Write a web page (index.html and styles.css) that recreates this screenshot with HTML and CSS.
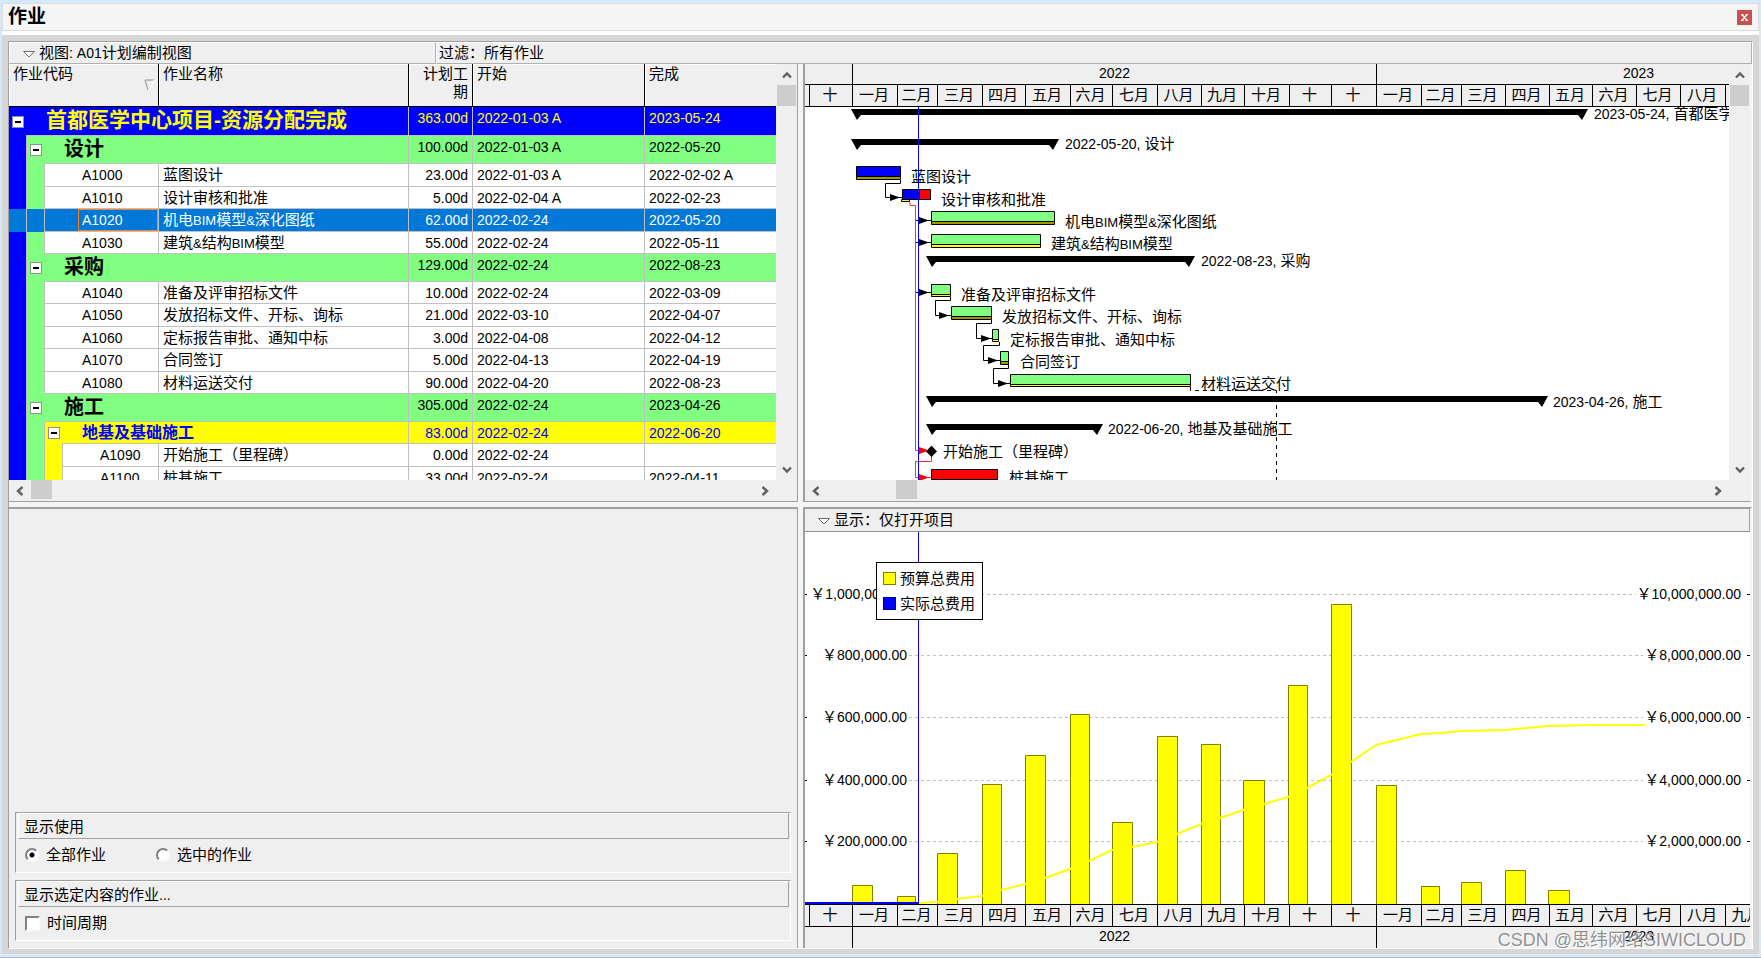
FILE: index.html
```html
<!DOCTYPE html>
<html lang="zh-CN">
<head>
<meta charset="utf-8">
<title>作业</title>
<link rel="stylesheet" href="styles.css">
</head>
<body>
<svg class="defs" aria-hidden="true">
  <symbol id="up" viewBox="0 0 10 10"><path d="M1 7.5 5 3.5 9 7.5" fill="none" stroke="#606060" stroke-width="2.4"/></symbol>
  <symbol id="down" viewBox="0 0 10 10"><path d="M1 2.5 5 6.5 9 2.5" fill="none" stroke="#606060" stroke-width="2.4"/></symbol>
  <symbol id="left" viewBox="0 0 10 10"><path d="M7.5 1 3 5 7.5 9" fill="none" stroke="#606060" stroke-width="2.4"/></symbol>
  <symbol id="right" viewBox="0 0 10 10"><path d="M2.5 1 7 5 2.5 9" fill="none" stroke="#606060" stroke-width="2.4"/></symbol>
  <symbol id="menu" viewBox="0 0 12 8"><path d="M.5 1.500H11.500L6 7Z" fill="#fff" stroke="#707070"/></symbol>
</svg>

<header class="titlebar">
  <h1>作业</h1>
  <button class="close" aria-label="关闭"><svg width="7" height="7" viewBox="0 0 7 7"><path d="M1 .5 6 6.5M6 .5 1 6.5M0 .5H2.4M4.6 .5H7M0 6.5H2.4M4.6 6.5H7" stroke="#fff" stroke-width="1.3"/></svg></button>
</header>

<main class="shell">
 <div class="frame">
  <div class="toolbar">
    <button class="view"><svg class="tri"><use href="#menu"/></svg>视图<span class="latin">: A01</span>计划编制视图</button>
    <div class="filter">过滤：所有作业</div>
  </div>
  <div class="panes">

   <section class="pane top left">
    <div class="scrollbox">
     <div class="content">
      <table class="tasks">
       <colgroup><col class="c-id"><col class="c-name"><col class="c-dur"><col class="c-start"><col></colgroup>
       <thead><tr>
        <th>作业代码<svg class="sort" width="11" height="12" viewBox="0 0 11 12"><path d="M1 1H10" stroke="#909090"/><path d="M1 1 4 11" stroke="#909090"/><path d="M10 1 5 11" stroke="#fff"/></svg></th>
        <th>作业名称</th><th class="num">计划工期</th><th>开始</th><th>完成</th>
       </tr></thead>
       <tbody>
        <tr class="root"><td colspan="2"><div class="tree"><span class="fold"><button aria-label="折叠"></button></span><span class="title">首都医学中心项目-资源分配完成</span></div></td><td class="num">363.00d</td><td>2022-01-03 A</td><td>2023-05-24</td></tr>
        <tr class="group"><td colspan="2"><div class="tree"><i class="bar blue"></i><span class="fold"><button aria-label="折叠"></button></span><span class="title">设计</span></div></td><td class="num">100.00d</td><td>2022-01-03 A</td><td>2022-05-20</td></tr>
        <tr><td><div class="tree"><i class="bar blue"></i><i class="bar green"></i><span class="id"><b>A1000</b></span></div></td><td class="name">蓝图设计</td><td class="num">23.00d</td><td>2022-01-03 A</td><td>2022-02-02 A</td></tr>
        <tr><td><div class="tree"><i class="bar blue"></i><i class="bar green"></i><span class="id"><b>A1010</b></span></div></td><td class="name">设计审核和批准</td><td class="num">5.00d</td><td>2022-02-04 A</td><td>2022-02-23</td></tr>
        <tr class="selected"><td><div class="tree"><i class="bar blue"></i><i class="bar green"></i><span class="id"><b>A1020</b></span></div></td><td class="name">机电<span class="small">BIM</span>模型<span class="small">&amp;</span>深化图纸</td><td class="num">62.00d</td><td>2022-02-24</td><td>2022-05-20</td></tr>
        <tr><td><div class="tree"><i class="bar blue"></i><i class="bar green"></i><span class="id"><b>A1030</b></span></div></td><td class="name">建筑<span class="small">&amp;</span>结构<span class="small">BIM</span>模型</td><td class="num">55.00d</td><td>2022-02-24</td><td>2022-05-11</td></tr>
        <tr class="group"><td colspan="2"><div class="tree"><i class="bar blue"></i><span class="fold"><button aria-label="折叠"></button></span><span class="title">采购</span></div></td><td class="num">129.00d</td><td>2022-02-24</td><td>2022-08-23</td></tr>
        <tr><td><div class="tree"><i class="bar blue"></i><i class="bar green"></i><span class="id"><b>A1040</b></span></div></td><td class="name">准备及评审招标文件</td><td class="num">10.00d</td><td>2022-02-24</td><td>2022-03-09</td></tr>
        <tr><td><div class="tree"><i class="bar blue"></i><i class="bar green"></i><span class="id"><b>A1050</b></span></div></td><td class="name">发放招标文件、开标、询标</td><td class="num">21.00d</td><td>2022-03-10</td><td>2022-04-07</td></tr>
        <tr><td><div class="tree"><i class="bar blue"></i><i class="bar green"></i><span class="id"><b>A1060</b></span></div></td><td class="name">定标报告审批、通知中标</td><td class="num">3.00d</td><td>2022-04-08</td><td>2022-04-12</td></tr>
        <tr><td><div class="tree"><i class="bar blue"></i><i class="bar green"></i><span class="id"><b>A1070</b></span></div></td><td class="name">合同签订</td><td class="num">5.00d</td><td>2022-04-13</td><td>2022-04-19</td></tr>
        <tr><td><div class="tree"><i class="bar blue"></i><i class="bar green"></i><span class="id"><b>A1080</b></span></div></td><td class="name">材料运送交付</td><td class="num">90.00d</td><td>2022-04-20</td><td>2022-08-23</td></tr>
        <tr class="group"><td colspan="2"><div class="tree"><i class="bar blue"></i><span class="fold"><button aria-label="折叠"></button></span><span class="title">施工</span></div></td><td class="num">305.00d</td><td>2022-02-24</td><td>2023-04-26</td></tr>
        <tr class="sub"><td colspan="2"><div class="tree"><i class="bar blue"></i><i class="bar green"></i><span class="fold"><button aria-label="折叠"></button></span><span class="title">地基及基础施工</span></div></td><td class="num">83.00d</td><td>2022-02-24</td><td>2022-06-20</td></tr>
        <tr><td><div class="tree"><i class="bar blue"></i><i class="bar green"></i><i class="bar yellow"></i><span class="id"><b>A1090</b></span></div></td><td class="name">开始施工（里程碑）</td><td class="num">0.00d</td><td>2022-02-24</td><td></td></tr>
        <tr><td><div class="tree"><i class="bar blue"></i><i class="bar green"></i><i class="bar yellow"></i><span class="id"><b>A1100</b></span></div></td><td class="name">桩基施工</td><td class="num">33.00d</td><td>2022-02-24</td><td>2022-04-11</td></tr>
       </tbody>
      </table>
     </div>
     <div class="vscroll"><button aria-label="向上"><svg><use href="#up"/></svg></button><i class="thumb"></i><button aria-label="向下"><svg><use href="#down"/></svg></button></div>
     <div class="hscroll"><button aria-label="向左"><svg><use href="#left"/></svg></button><i class="thumb"></i><button aria-label="向右"><svg><use href="#right"/></svg></button></div>
    </div>
   </section>

   <section class="pane top right">
    <div class="scrollbox">
     <div class="content gantt">
      <div class="scale">
       <div class="years"><span style="width:47px"></span><span style="width:524px">2022</span><span style="width:524px">2023</span></div>
       <div class="months"><span style="width:4px"></span><span style="width:43px">十</span><span style="width:45px">一月</span><span style="width:40px">二月</span><span style="width:45px">三月</span><span style="width:43px">四月</span><span style="width:45px">五月</span><span style="width:42px">六月</span><span style="width:45px">七月</span><span style="width:44px">八月</span><span style="width:43px">九月</span><span style="width:45px">十月</span><span style="width:42px">十</span><span style="width:45px">十</span><span style="width:45px">一月</span><span style="width:40px">二月</span><span style="width:44px">三月</span><span style="width:44px">四月</span><span style="width:43px">五月</span><span style="width:44px">六月</span><span style="width:44px">七月</span><span style="width:45px">八月</span><span style="width:44px">九月</span></div>
      </div>
      <svg class="canvas">
       <defs>
        <path id="head" d="M-11-3.5-1 0-11 3.5Z"/>
       </defs>
       <g transform="translate(-805 -107)">
        <!-- summary bars -->
        <path d="M851 109H1588L1582 120 1578 115H861L857 120Z"/>
        <path d="M851 139H1059L1053 150 1049 145H861L857 150Z"/>
        <path d="M926 256H1195L1189 267 1185 262H936L932 267Z"/>
        <path d="M926 396H1548L1542 407 1538 402H936L932 407Z"/>
        <path d="M926 424H1103L1097 435 1093 430H936L932 435Z"/>
        <!-- task bars -->
        <g stroke="#000">
         <path fill="#00f" d="M856.500 166.500H900.500V176.500H856.500Z"/><path fill="#a09800" d="M856.500 176.500H900.500V179.500H856.500Z"/>
         <path fill="#ff0" d="M901.500 199.500H909.500V201.500H901.500Z"/><path fill="#00f" d="M902.500 189.500H919.500V199.500H902.500Z"/><path fill="#f00" d="M919.500 189.500H930.500V199.500H919.500Z"/>
         <path fill="#80ff80" d="M931.500 211.500H1054.500V221.500H931.500Z"/><path fill="#a09800" d="M931.500 221.500H1054.500V224.500H931.500Z"/>
         <path fill="#80ff80" d="M931.500 234.500H1040.500V244.500H931.500Z"/><path fill="#ff0" d="M931.500 244.500H1040.500V247.500H931.500Z"/>
         <path fill="#80ff80" d="M931.500 284.500H950.500V294.500H931.500Z"/><path fill="#ff0" d="M931.500 294.500H950.500V296.500H931.500Z"/>
         <path fill="#80ff80" d="M951.500 306.500H991.500V316.500H951.500Z"/><path fill="#a09800" d="M951.500 316.500H991.500V319.500H951.500Z"/>
         <path fill="#80ff80" d="M992.500 329.500H998.500V339.500H992.500Z"/><path fill="#ff0" d="M992.500 339.500H998.500V341.500H992.500Z"/>
         <path fill="#80ff80" d="M1000.500 351.500H1008.500V361.500H1000.500Z"/><path fill="#a09800" d="M1000.500 361.500H1008.500V364.500H1000.500Z"/>
         <path fill="#80ff80" d="M1010.500 374.500H1190.500V384.500H1010.500Z"/><path fill="#ff0" d="M1010.500 384.500H1190.500V386.500H1010.500Z"/>
         <path fill="#f00" d="M931.500 469.500H997.500V479.500H931.500Z"/>
        </g>
        <!-- relationship lines -->
        <g fill="none" stroke="#000">
         <path d="M900.500 180V183.500H885.500V197.500H902"/>
         <path d="M915 220.500H931M915 242.500H931M915 292.500H931"/>
         <path d="M950.500 297V300.500H935.500V315.500H951"/>
         <path d="M991.500 320V323.500H976.500V338.500H992"/>
         <path d="M999.500 342V345.500H983.500V360.500H1000"/>
         <path d="M1008.500 365V368.500H993.500V383.500H1010"/>
         <path stroke-dasharray="4 4" d="M1190.500 387V390.500H1276.500V480"/>
         <path stroke="#ff3030" d="M910 202V205.500H915.500V450.500H931M931.500 456V461.500H915.500V477.500H931"/>
        </g>
        <use href="#head" x="901" y="197.500"/><use href="#head" x="930" y="220.500"/><use href="#head" x="930" y="242.500"/><use href="#head" x="930" y="292.500"/>
        <use href="#head" x="950" y="315.500"/><use href="#head" x="992" y="338.500"/><use href="#head" x="999" y="360.500"/><use href="#head" x="1009" y="383.500"/>
        <use href="#head" x="930" y="450.500" fill="#f00"/><use href="#head" x="930" y="477.500" fill="#f00"/>
        <path d="M931.500 445.500 937 451.500 931.500 457 926 451.500Z"/>
        <text x="1594" y="119"><tspan class="d">2023-05-24, </tspan>首都医学中心项目-资源分配完成</text>
        <text x="1065" y="149"><tspan class="d">2022-05-20, </tspan>设计</text>
        <text x="911" y="182">蓝图设计</text>
        <text x="941" y="205">设计审核和批准</text>
        <text x="1065" y="227">机电<tspan class="small">BIM</tspan>模型<tspan class="small">&amp;</tspan>深化图纸</text>
        <text x="1051" y="249">建筑<tspan class="small">&amp;</tspan>结构<tspan class="small">BIM</tspan>模型</text>
        <text x="1201" y="266"><tspan class="d">2022-08-23, </tspan>采购</text>
        <text x="961" y="300">准备及评审招标文件</text>
        <text x="1002" y="322">发放招标文件、开标、询标</text>
        <text x="1010" y="345">定标报告审批、通知中标</text>
        <text x="1020" y="367">合同签订</text>
        <text x="1201" y="389">材料运送交付</text>
        <text x="1553" y="407"><tspan class="d">2023-04-26, </tspan>施工</text>
        <text x="1108" y="434"><tspan class="d">2022-06-20, </tspan>地基及基础施工</text>
        <text x="943" y="457">开始施工（里程碑）</text>
        <text x="1009" y="483">桩基施工</text>
        <path d="M918.500 107V900" stroke="#00f"/>
       </g>
      </svg>
     </div>
     <div class="vscroll"><button aria-label="向上"><svg><use href="#up"/></svg></button><i class="thumb"></i><button aria-label="向下"><svg><use href="#down"/></svg></button></div>
     <div class="hscroll offset"><button aria-label="向左"><svg><use href="#left"/></svg></button><i class="thumb"></i><button aria-label="向右"><svg><use href="#right"/></svg></button></div>
    </div>
   </section>

   <section class="pane bottom left options">
    <fieldset>
     <legend>显示使用</legend>
     <div class="choices">
      <label><input type="radio" name="use" checked>全部作业</label>
      <label><input type="radio" name="use">选中的作业</label>
     </div>
    </fieldset>
    <fieldset>
     <legend>显示选定内容的作业<span class="latin">...</span></legend>
     <div class="choices"><label><input type="checkbox">时间周期</label></div>
    </fieldset>
   </section>

   <section class="pane bottom right profile">
    <button class="display"><svg class="tri"><use href="#menu"/></svg>显示：仅打开项目</button>
    <div class="plot">
     <svg class="canvas">
      <g transform="translate(-805 -532)">
       <path d="M909 594.500H1636M909 655.500H1643M909 717.500H1643M909 780.500H1643M909 841.500H1643" stroke="#c0c0c0" stroke-dasharray="3 3"/>
       <path d="M805 594.500H807M805 655.500H807M805 717.500H807M805 780.500H807M805 841.500H807M1747 594.500H1750M1747 655.500H1750M1747 717.500H1750M1747 780.500H1750M1747 841.500H1750" stroke="#000"/>
       <g fill="#ff0" stroke="#808000">
        <path d="M852.500 904V885.500H872.500V904"/><path d="M897.500 904V896.500H915.500V904"/><path d="M937.500 904V853.500H957.500V904"/>
        <path d="M982.500 904V784.500H1001.500V904"/><path d="M1025.500 904V755.500H1045.500V904"/><path d="M1070.500 904V714.500H1089.500V904"/>
        <path d="M1112.500 904V822.500H1132.500V904"/><path d="M1157.500 904V736.500H1177.500V904"/><path d="M1201.500 904V744.500H1220.500V904"/>
        <path d="M1243.500 904V780.500H1264.500V904"/><path d="M1288.500 904V685.500H1307.500V904"/><path d="M1331.500 904V604.500H1351.500V904"/>
        <path d="M1376.500 904V785.500H1396.500V904"/><path d="M1421.500 904V886.500H1439.500V904"/><path d="M1461.500 904V882.500H1481.500V904"/>
        <path d="M1505.500 904V870.500H1525.500V904"/><path d="M1548.500 904V890.500H1569.500V904"/>
       </g>
       <path fill="none" stroke="#ff0" stroke-width="2" d="M897 903H919L937 902 957 899 982 896 1001 890 1025 884 1045 878 1070 869 1089 861 1112 850 1132 847 1157 842 1177 834 1201 824 1220 818 1243 810 1264 804 1288 797 1307 788 1331 775 1351 762 1376 745 1421 734 1441 733 1461 731 1505 730 1548 726 1592 725 1645 725M1749 725H1752"/>
       <path d="M805 903H918" stroke="#00f" stroke-width="2"/>
       <path d="M918.500 532V904" stroke="#00f"/>
       <g class="axis">
        <text x="907" y="599">￥<tspan class="d">1,000,000.00</tspan></text><text x="907" y="660">￥<tspan class="d">800,000.00</tspan></text><text x="907" y="722">￥<tspan class="d">600,000.00</tspan></text><text x="907" y="785">￥<tspan class="d">400,000.00</tspan></text><text x="907" y="846">￥<tspan class="d">200,000.00</tspan></text>
        <text x="1741" y="599">￥<tspan class="d">10,000,000.00</tspan></text><text x="1741" y="660">￥<tspan class="d">8,000,000.00</tspan></text><text x="1741" y="722">￥<tspan class="d">6,000,000.00</tspan></text><text x="1741" y="785">￥<tspan class="d">4,000,000.00</tspan></text><text x="1741" y="846">￥<tspan class="d">2,000,000.00</tspan></text>
       </g>
      </g>
     </svg>
     <ul class="key"><li><i class="swatch"></i>预算总费用</li><li><i class="swatch actual"></i>实际总费用</li></ul>
    </div>
    <div class="scale below">
     <div class="months"><span style="width:4px"></span><span style="width:43px">十</span><span style="width:45px">一月</span><span style="width:40px">二月</span><span style="width:45px">三月</span><span style="width:43px">四月</span><span style="width:45px">五月</span><span style="width:42px">六月</span><span style="width:45px">七月</span><span style="width:44px">八月</span><span style="width:43px">九月</span><span style="width:45px">十月</span><span style="width:42px">十</span><span style="width:45px">十</span><span style="width:45px">一月</span><span style="width:40px">二月</span><span style="width:44px">三月</span><span style="width:44px">四月</span><span style="width:43px">五月</span><span style="width:44px">六月</span><span style="width:44px">七月</span><span style="width:45px">八月</span><span style="width:44px">九月</span></div>
     <div class="years"><span style="width:47px"></span><span style="width:524px">2022</span><span style="width:524px">2023</span></div>
    </div>
    <div class="watermark">CSDN @思纬网络SIWICLOUD</div>
   </section>
  </div>
 </div>
</main>
</body>
</html>
```
FILE: styles.css
```css
* { box-sizing: border-box; }

body {
  margin: 0;
  height: 100vh;
  display: flex;
  flex-direction: column;
  padding: 3px 2px 3px;
  background: #d4eafb;
  border-bottom: 1px solid #b8b8b8;
  color: #000;
  font: 15px/20px "Liberation Sans", "Noto Sans CJK SC", sans-serif;
  overflow: hidden;
}

button {
  margin: 0;
  padding: 0;
  border: 0;
  background: none;
  color: inherit;
  font: inherit;
}

.defs { position: absolute; width: 0; height: 0; }
.latin { font-size: 14px; }
.small { font-size: 13px; line-height: 1; }

/* title bar */
.titlebar {
  flex: none;
  display: flex;
  align-items: center;
  justify-content: space-between;
  height: 28px;
  padding: 0 6px 0 5px;
  border: 1px solid #dcdcdc;
  background: #f5f5f5;
}
.titlebar h1 { margin: 0; font-size: 19px; line-height: 26px; }
.close {
  display: flex;
  align-items: center;
  justify-content: center;
  width: 15px;
  height: 15px;
  background: #c75050;
}

.shell {
  flex: 1;
  min-height: 0;
  display: flex;
  padding: 6px 6px 5px;
  border-top: 4px solid #fdfdfd;
  background: #d6d6d6;
}
.frame {
  flex: 1;
  min-width: 0;
  display: flex;
  flex-direction: column;
  border: 1px solid #a0a0a0;
  border-right-color: #fff;
  border-bottom-color: #fff;
  background: #efefef;
}

/* toolbar */
.toolbar { flex: none; display: flex; height: 22px; }
.toolbar > * {
  border: 1px solid #b0b0b0;
  border-left-color: #fff;
  border-top-color: #fff;
  line-height: 20px;
}
.view { flex: none; width: 427px; text-align: left; }
.filter { flex: 1; padding-left: 2px; }
.tri { width: 12px; height: 8px; margin: 0 4px 0 13px; }

/* four panes around a cross-shaped splitter */
.panes {
  flex: 1;
  min-height: 0;
  display: grid;
  grid-template: minmax(0, 438fr) minmax(0, 441fr) / minmax(0, 789fr) minmax(0, 949fr);
  gap: 5px;
  background: #f4f4f4;
}
.pane { background: #efefef; overflow: hidden; }
.top { border-bottom: 1px solid #a0a0a0; }
.bottom { border-top: 2px solid #a0a0a0; }
.left { border-right: 1px solid #a0a0a0; }
.right { border-left: 2px solid #a0a0a0; border-right: 2px solid #f4f4f4; }

.scrollbox {
  height: 100%;
  display: grid;
  grid-template: minmax(0, 1fr) 21px / minmax(0, 1fr) 21px;
}
.content { overflow: hidden; background: #fff; }
.vscroll, .hscroll { display: flex; background: #efefef; }
.vscroll { flex-direction: column; padding: 0 1px; }
.vscroll button, .hscroll button {
  flex: none;
  display: flex;
  align-items: center;
  justify-content: center;
}
.vscroll button { height: 21px; }
.hscroll button { width: 22px; }
.vscroll button:last-child { margin-top: auto; }
.hscroll button:last-child { margin-left: auto; }
.vscroll svg, .hscroll svg { width: 10px; height: 10px; }
.thumb { background: #cdcdcd; }
.vscroll .thumb { height: 21px; }
.hscroll .thumb { width: 21px; height: 19px; }
.offset .thumb { margin-left: 69px; }

/* task table */
.tasks { width: 100%; table-layout: fixed; border-collapse: separate; border-spacing: 0; }
.c-id { width: 150px; }
.c-name { width: 250px; }
.c-dur { width: 64px; }
.c-start { width: 172px; }
.tasks th {
  position: relative;
  height: 43px;
  padding: 1px 4px 0;
  border: 1px solid #000;
  border-width: 0 1px 1px 0;
  box-shadow: inset 1px 1px #fff;
  background: #efefef;
  font-weight: normal;
  line-height: 18px;
  text-align: left;
  vertical-align: top;
}
.tasks th.num { padding-left: 12px; }
.tasks th:last-child { border-right: 0; }
.tasks .num { text-align: right; }
.sort { position: absolute; right: 3px; bottom: 15px; fill: none; }

.tasks tbody tr { --h: 22px; --bg: #fff; }
.tasks tbody tr:nth-child(odd) { --h: 23px; }
.tasks tbody tr.root { --h: 29px; --bg: #00f; color: #ff0; }
.tasks tbody tr.group { --h: 28px; --bg: #80ff80; }
.tasks tbody tr.sub { --bg: #ff0; color: #00f; }
.tasks tbody tr.selected { --bg: #0078d7; color: #fff; }
.tasks td {
  height: var(--h);
  padding: 2px 4px 0;
  border: 1px solid #c0c0c0;
  border-width: 0 1px 1px 0;
  background: var(--bg);
  font-size: 14px;
  line-height: 19px;
  vertical-align: top;
  white-space: nowrap;
}
.tasks td:last-child { border-right: 0; }
.tasks td.name { padding-top: 1px; font-size: 15px; }
.tasks td:first-child { padding: 0; border-bottom: 0; }
.tree { display: flex; height: var(--h); }
.bar { flex: none; width: 18px; border-right: 1px solid #c0c0c0; }
.blue { background: #00f; }
.green { background: #80ff80; }
.yellow { background: #ff0; }
.selected .bar { background: #0078d7; }
.fold { flex: none; display: flex; align-items: center; width: 17px; padding-left: 3px; }
.fold button {
  width: 12px;
  height: 12px;
  border: 1px solid #909090;
  background: linear-gradient(#000, #000) center / 6px 2px no-repeat #fff;
}
.title {
  flex: 1;
  padding-left: 20px;
  border-bottom: 1px solid #c0c0c0;
  font-size: 20px;
  font-weight: bold;
  line-height: 26px;
}
.root .title { font-size: 21px; }
.sub .title { font-size: 16px; line-height: 21px; }
.id { flex: 1; display: flex; padding-left: 33px; border-bottom: 1px solid #c0c0c0; }
.id b { flex: 1; padding-left: 3px; border: 1px solid transparent; font-weight: normal; line-height: 21px; }
.selected .id b { border-color: #ff8020; }

/* time scale */
.scale { background: #efefef; overflow: hidden; }
.years, .months { display: flex; }
.years span, .months span { flex: none; border-left: 1px solid #000; text-align: center; overflow: hidden; }
.years span:first-child, .months span:first-child { border-left: 0; }
.years { height: 21px; border-bottom: 1px solid #000; font-size: 14px; line-height: 19px; }
.months { height: 22px; border-bottom: 1px solid #000; line-height: 20px; }
.months span { padding-right: 2px; }
.below .months { height: 23px; border-top: 1px solid #000; }
.below .years { border-bottom: 0; }

.gantt { display: flex; flex-direction: column; }
.canvas { display: block; flex: 1; width: 100%; min-height: 0; overflow: hidden; font-size: 15px; }
.canvas .d { font-size: 14px; }
.axis { text-anchor: end; }

/* spending profile */
.profile { position: relative; display: flex; flex-direction: column; }
.display {
  flex: none;
  height: 23px;
  border-bottom: 1px solid #909090;
  border-right: 1px solid #a0a0a0;
  text-align: left;
}
.plot { position: relative; flex: 1; min-height: 0; display: flex; background: #fff; }
.key {
  position: absolute;
  left: 71px;
  top: 30px;
  margin: 0;
  padding: 3px 7px 3px 6px;
  border: 1px solid #000;
  background: #fff;
  list-style: none;
}
.key li { display: flex; align-items: center; gap: 4px; height: 25px; }
.swatch { width: 13px; height: 13px; border: 1px solid #808000; background: #ff0; }
.swatch.actual { border-color: #000080; background: #00f; }
.watermark {
  position: absolute;
  right: 4px;
  bottom: -4px;
  color: rgba(110, 110, 110, .75);
  font-size: 18px;
  line-height: 24px;
  text-shadow: 1px 1px #fff;
}

/* options */
.options {
  display: flex;
  flex-direction: column;
  justify-content: flex-end;
  gap: 7px;
  padding: 0 6px 7px;
}
fieldset {
  margin: 0;
  padding: 0 1px 0 2px;
  border: 1px solid #a0a0a0;
  border-right-color: #fff;
  border-bottom-color: #fff;
}
legend {
  float: left;
  width: 100%;
  height: 26px;
  padding: 0 5px;
  border: 1px solid #a0a0a0;
  border-left-color: #fff;
  border-top-color: #fff;
  line-height: 25px;
}
.choices { clear: both; display: flex; gap: 50px; padding: 6px 0 7px 7px; }
.choices label { display: flex; align-items: center; gap: 7px; }
.choices input {
  appearance: none;
  width: 15px;
  height: 15px;
  margin: 0;
  border: 2px solid;
  border-color: #808080 #fafafa #fafafa #808080;
  background: #fff;
}
.choices input[type="radio"] { width: 14px; height: 14px; border-radius: 50%; }
.choices input[type="radio"]:checked { background: radial-gradient(circle, #000 2px, #fff 3px); }
```
